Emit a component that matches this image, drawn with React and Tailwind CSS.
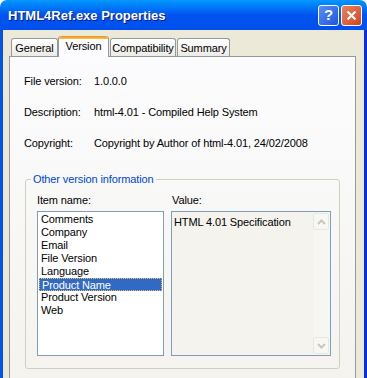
import React from 'react'

const font = { fontFamily: '"Liberation Sans", Arial, sans-serif' }

const items = ['Comments', 'Company', 'Email', 'File Version', 'Language', 'Product Name', 'Product Version', 'Web']

const Tab = ({ label, active, w }) =>
  active ? (
    <div className={`relative z-10 -mb-px h-[21px] ${w} rounded-t-[3px] border-x border-[#919b9c] bg-[#fcfcfe] text-center`}>
      <div className="h-[3px] rounded-t-[3px] bg-gradient-to-b from-[#e68b2c] to-[#ffc73c]" />
      <div className="pt-[1px] leading-[13px]">{label}</div>
    </div>
  ) : (
    <div className={`h-[18px] ${w} rounded-t-[3px] border border-b-0 border-[#919b9c] bg-gradient-to-b from-white to-[#ecebe5] pt-[3px] text-center leading-[13px]`}>
      {label}
    </div>
  )

const Arrow = ({ up }) => (
  <div className="flex h-[17px] w-[16px] items-center justify-center rounded-[2px] border border-[#e8e8e2] bg-[#f7f7f4]">
    <svg width="9" height="6" viewBox="0 0 9 6">
      <path d={up ? 'M1 5 L4.5 1.5 L8 5' : 'M1 1 L4.5 4.5 L8 1'} fill="none" stroke="#c9c7ba" strokeWidth="2" />
    </svg>
  </div>
)

export default function App() {
  return (
    <div className="h-[378px] w-[367px] overflow-hidden text-[11px] tracking-[-0.12px] text-black" style={font}>
      {/* Title bar */}
      <div className="flex h-[30px] items-center rounded-t-[7px] bg-gradient-to-b from-[#0997ff] via-[#0053ee] to-[#0050ee] pl-[8px] pr-[5px]">
        <div className="flex-1 pt-[2px] text-[13px] font-bold tracking-normal text-white [text-shadow:1px_1px_#0a1883]">HTML4Ref.exe Properties</div>
        <div className="flex gap-[2px] pt-[1px]">
          <div className="flex h-[21px] w-[21px] items-center justify-center rounded-[3px] border border-white bg-gradient-to-br from-[#5a8df5] to-[#1c56de] text-[15px] font-bold text-white">?</div>
          <div className="flex h-[21px] w-[21px] items-center justify-center rounded-[3px] border border-white bg-gradient-to-br from-[#e8845f] to-[#d43f1a]">
            <svg width="11" height="11" viewBox="0 0 11 11">
              <path d="M1.5 1.5 L9.5 9.5 M9.5 1.5 L1.5 9.5" stroke="white" strokeWidth="2.2" />
            </svg>
          </div>
        </div>
      </div>

      {/* Body */}
      <div className="h-[348px] border-x-[3px] border-l-[#0055e5] border-r-[#0831d9] bg-[#ece9d8] pl-[6px] pr-[8px] pt-[6px]">
        <div className="flex items-end pl-[2px]">
          <Tab label="General" w="w-[47px]" />
          <Tab label="Version" w="w-[51px]" active />
          <div className="w-[1px]" />
          <Tab label="Compatibility" w="w-[66px]" />
          <div className="w-[1px]" />
          <Tab label="Summary" w="w-[53px]" />
        </div>

        <div className="h-[330px] border border-[#919b9c] bg-gradient-to-b from-[#fcfcfe] to-[#f4f3ee] pl-[14px] pr-[14px] pt-[18px]">
          <div className="flex flex-col gap-[18px] leading-[13px]">
            <div className="flex"><div className="w-[70px]">File version:</div><div>1.0.0.0</div></div>
            <div className="flex"><div className="w-[70px]">Description:</div><div>html-4.01 - Compiled Help System</div></div>
            <div className="flex"><div className="w-[70px]">Copyright:</div><div>Copyright by Author of html-4.01, 24/02/2008</div></div>
          </div>

          {/* Group box */}
          <div className="relative mt-[29px] ml-[1px] mr-[1px] h-[190px] rounded-[3px] border border-[#d0d0bf] pl-[11px] pt-[14px]">
            <div className="absolute -top-[8px] left-[5px] bg-[#f8f8f6] px-[2px] leading-[14px] text-[#0046d5]">Other version information</div>
            <div className="flex gap-[7px]">
              <div>
                <div className="leading-[13px]">Item name:</div>
                <div className="mt-[4px] h-[145px] w-[127px] border border-[#7f9db9] bg-white p-[1px]">
                  {items.map((it) => (
                    <div
                      key={it}
                      className={`h-[13px] pl-[2px] leading-[13px] ${it === 'Product Name' ? 'border border-dotted border-[#f0c060] bg-[#316ac5] pl-[1px] leading-[11px] text-white' : ''}`}
                    >
                      {it}
                    </div>
                  ))}
                </div>
              </div>
              <div>
                <div className="pl-[1px] leading-[13px]">Value:</div>
                <div className="mt-[4px] flex h-[145px] w-[160px] border border-[#7f9db9] bg-[#f4f3ee]">
                  <div className="flex-1 pl-[2px] pt-[4px] leading-[13px]">HTML 4.01 Specification</div>
                  <div className="flex w-[17px] flex-col justify-between bg-[#f7f7f2] py-[1px] pr-[1px]">
                    <Arrow up />
                    <Arrow />
                  </div>
                </div>
              </div>
            </div>
          </div>
        </div>
      </div>
    </div>
  )
}
